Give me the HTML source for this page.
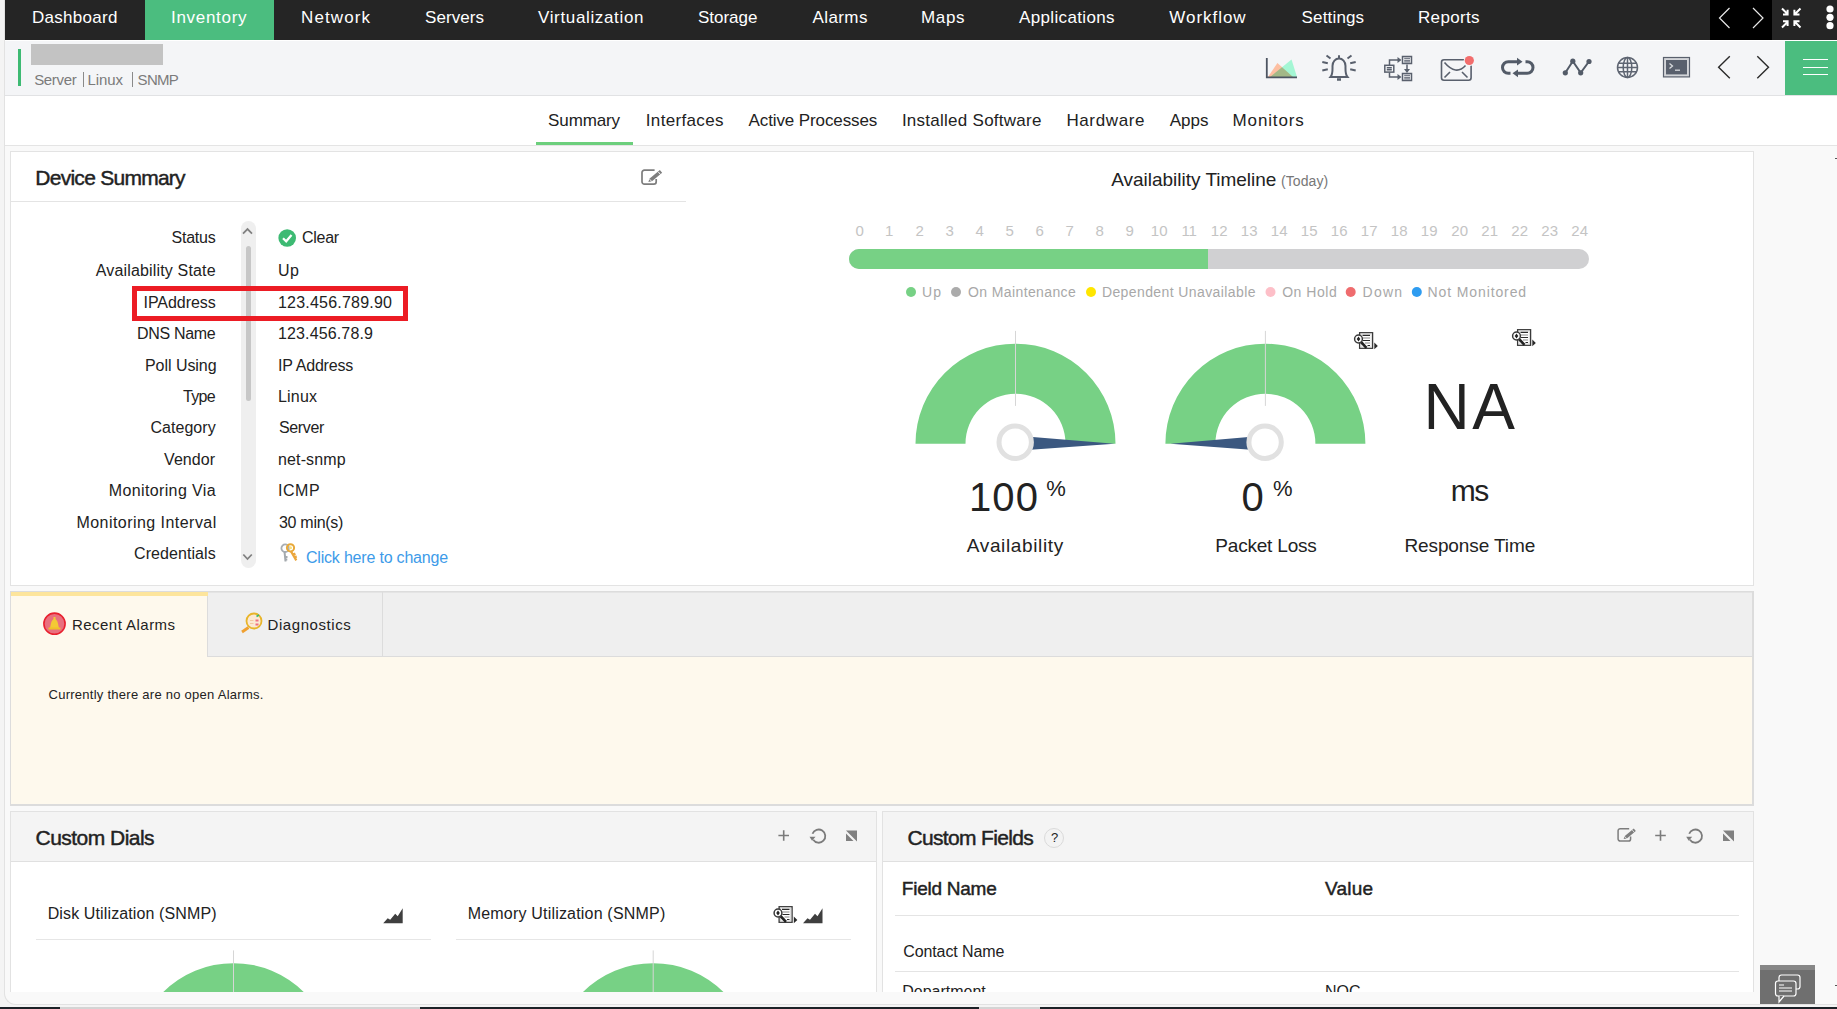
<!DOCTYPE html>
<html><head><meta charset="utf-8">
<style>
html,body{margin:0;padding:0}
body{width:1837px;height:1009px;overflow:hidden;position:relative;background:#f4f4f4;font-family:"Liberation Sans",sans-serif}
.a{position:absolute}
.t{position:absolute;line-height:1;white-space:nowrap;font-family:"Liberation Sans",sans-serif}
svg{position:absolute;overflow:visible}
</style></head><body>
<!-- left strip line -->
<div class="a" style="left:4px;top:0px;width:1px;height:146px;background:#e2e2e2"></div>
<!-- main container bg -->
<div class="a" style="left:4px;top:146px;width:1840px;height:858px;background:#f9f9f9;border-left:1px solid #e2e2e2;border-bottom:1px solid #e2e2e2;border-bottom-left-radius:12px;box-sizing:border-box"></div>
<!-- bottom strip -->


<!-- NAV -->
<div class="a" style="left:5px;top:0;width:1832px;height:40px;background:#252525"></div>
<div class="a" style="left:145px;top:0;width:129px;height:40px;background:#4bbd7f"></div>
<div class="a" style="left:1710px;top:0;width:62px;height:40px;background:#000"></div>
<svg style="left:0;top:0" width="1837" height="40">
  <polyline points="1729.5,8 1719.5,18 1729.5,28" fill="none" stroke="#e8e8e8" stroke-width="1.2"/>
  <polyline points="1753,8 1763,18 1753,28" fill="none" stroke="#e8e8e8" stroke-width="1.2"/>
  <g stroke="#fff" stroke-width="2" fill="none">
    <path d="M1782,8.5 L1787.5,14 M1783,14.5 H1787.6 V9.8"/>
    <path d="M1800.5,8.5 L1795,14 M1799.5,14.5 H1794.4 V9.8"/>
    <path d="M1782,27.5 L1787.5,22 M1783,21.3 H1787.6 V26"/>
    <path d="M1800.5,27.5 L1795,22 M1799.5,21.3 H1794.4 V26"/>
  </g>
  <circle cx="1830" cy="9" r="3.6" fill="#fff"/>
  <circle cx="1830" cy="17.3" r="3.6" fill="#fff"/>
  <circle cx="1830" cy="25.7" r="3.6" fill="#fff"/>
</svg>

<!-- HEADER -->
<div class="a" style="left:5px;top:40px;width:1832px;height:1px;background:#ffffff"></div>
<div class="a" style="left:5px;top:41px;width:1832px;height:54px;background:#f4f5f7"></div>
<div class="a" style="left:5px;top:95px;width:1832px;height:1px;background:#e1e2e4"></div>
<div class="a" style="left:18px;top:49px;width:3px;height:37px;background:#3dba73"></div>
<div class="a" style="left:31px;top:44px;width:132px;height:21px;background:#c3c3c3"></div>
<div class="a" style="left:83px;top:72px;width:1px;height:15px;background:#8a8a8a"></div>
<div class="a" style="left:132px;top:72px;width:1px;height:15px;background:#8a8a8a"></div>
<div class="a" style="left:1785px;top:41px;width:52px;height:54px;background:#4bbd7f"></div>
<div class="a" style="left:1803px;top:59px;width:25px;height:1px;background:#fff"></div>
<div class="a" style="left:1803px;top:67px;width:25px;height:1px;background:#fff"></div>
<div class="a" style="left:1803px;top:74px;width:25px;height:1px;background:#fff"></div>

<svg style="left:0;top:0" width="1837" height="100">
 <g style="isolation:isolate">
  <polygon points="1268,77 1277.4,63 1293,77" fill="#fdbfa2"/>
  <polygon points="1270,77 1291.5,59.5 1297,77" fill="#a4f6d4" style="mix-blend-mode:multiply"/>
 </g>
 <path d="M1266.8,58 V77.3 H1297" fill="none" stroke="#4d5562" stroke-width="1.8"/>
 <g fill="none" stroke="#59606d" stroke-width="2" stroke-linecap="butt">
  <path d="M1339,55.3 V58.5 M1330.5,77 C1333,74 1332.5,70 1332.5,66 C1332.5,61.5 1335.5,58.5 1339,58.5 C1342.5,58.5 1345.5,61.5 1345.5,66 C1345.5,70 1345,74 1347.5,77 H1330.5 Z"/>
  <path d="M1337,79.5 H1341" stroke-width="2.5"/>
  <path d="M1322.3,62 L1327.8,63.3 M1322.3,70.5 L1327.8,69.2 M1355.7,62 L1350.2,63.3 M1355.7,70.5 L1350.2,69.2 M1326.5,55.5 L1330.5,58.5 M1351.5,55.5 L1347.5,58.5"/>
 </g>
 <g fill="none" stroke="#59606d" stroke-width="1.5">
  <rect x="1384.8" y="65.3" width="9" height="6.8"/>
  <path d="M1386.8,67.8 H1391.8 M1386.8,69.8 H1391.8"/>
  <rect x="1402.5" y="56.5" width="9" height="7"/>
  <rect x="1402.5" y="73.5" width="9" height="7"/>
  <path d="M1389.5,65 V60 H1398 M1389.5,72.5 V77 H1398 M1407,64.5 V69.5"/>
 </g>
 <path d="M1404.2,58.3 H1410 M1404.2,60.3 H1410 M1404.2,61.9 H1410 M1404.2,75.3 H1410 M1404.2,77.3 H1410 M1404.2,78.9 H1410" stroke="#59606d" stroke-width="1"/>
 <polygon points="1397.5,57 1401.5,60 1397.5,63" fill="#59606d"/>
 <polygon points="1397.5,74 1401.5,77 1397.5,80" fill="#59606d"/>
 <polygon points="1404,69 1407,73 1410,69" fill="#59606d"/>
 <g fill="none" stroke="#59606d" stroke-width="1.6">
  <rect x="1441.5" y="59.7" width="29.6" height="20.6" rx="2.5"/>
  <path d="M1444.5,62.5 Q1456,76 1465.5,65.5 M1444.5,77.5 L1450,72 M1467.5,77.5 L1462,72"/>
 </g>
 <circle cx="1469.3" cy="60.5" r="5.6" fill="#f4f5f7"/>
 <circle cx="1469.3" cy="60.5" r="4.6" fill="#f26d6d"/>
 <g fill="none" stroke="#535b68" stroke-width="3">
  <path d="M1517.5,61.7 H1508.3 A5.8,5.8 0 0 0 1508.3,73.3 H1510.5"/>
  <path d="M1525.5,61.7 H1527.2 A5.8,5.8 0 0 1 1527.2,73.3 H1517"/>
 </g>
 <polygon points="1517,57.8 1522.5,61.7 1517,65.6" fill="#535b68"/>
 <polygon points="1518,69.4 1512.5,73.3 1518,77.2" fill="#535b68"/>
 <g stroke="#535b68" stroke-width="2" fill="#535b68">
  <polyline points="1565.3,72.8 1572.8,61.2 1580.7,72.8 1589,61.5" fill="none"/>
  <circle cx="1565.3" cy="72.8" r="2.6" stroke="none"/>
  <circle cx="1572.8" cy="61.2" r="2.6" stroke="none"/>
  <circle cx="1580.7" cy="72.8" r="2.6" stroke="none"/>
  <circle cx="1589" cy="61.5" r="2.6" stroke="none"/>
 </g>
 <g fill="none" stroke="#5e6572" stroke-width="1.5">
  <circle cx="1627.5" cy="67.5" r="10"/>
  <ellipse cx="1627.5" cy="67.5" rx="4.3" ry="10"/>
  <path d="M1627.5,57.5 V77.5 M1618,63.2 H1637 M1617.5,67.5 H1637.5 M1618,71.8 H1637"/>
 </g>
 <rect x="1663.5" y="57.5" width="26" height="19.4" fill="#d3d5d9" stroke="#59606d" stroke-width="1.2"/>
 <rect x="1666" y="60" width="21" height="14.4" fill="#59606d"/>
 <path d="M1669.5,63.5 L1672.5,66 L1669.5,68.5" fill="none" stroke="#d8dadd" stroke-width="1.3"/>
 <path d="M1675,70.2 H1680" stroke="#d8dadd" stroke-width="1.3"/>
 <polyline points="1729.8,56.2 1718.6,67.2 1729.8,78.2" fill="none" stroke="#2a2a2a" stroke-width="1.4"/>
 <polyline points="1757.3,56.2 1768.5,67.2 1757.3,78.2" fill="none" stroke="#2a2a2a" stroke-width="1.4"/>
</svg>


<!-- TAB BAR -->
<div class="a" style="left:5px;top:96px;width:1832px;height:49px;background:#ffffff"></div>
<div class="a" style="left:5px;top:145px;width:1832px;height:1px;background:#e4e4e4"></div>
<div class="a" style="left:536px;top:142px;width:97px;height:3px;background:#6ccf7c"></div>


<div class="a" style="left:1835px;top:158px;width:2px;height:1px;background:#555"></div>
<div class="a" style="left:1835px;top:985px;width:2px;height:1px;background:#555"></div>
<!-- CARD 1 -->
<div class="a" style="left:10px;top:151px;width:1744px;height:435px;background:#fff;border:1px solid #e3e3e3;box-sizing:border-box"></div>
<div class="a" style="left:11px;top:201px;width:675px;height:1px;background:#e4e4e4"></div>
<div class="a" style="left:241px;top:221px;width:15px;height:347px;background:#efefef;border-radius:7.5px"></div>
<div class="a" style="left:246px;top:246px;width:5px;height:155px;background:#c7c7c7;border-radius:2.5px"></div>
<div class="a" style="left:132px;top:286px;width:276px;height:35px;border:5px solid #ec1c24;box-sizing:border-box"></div>
<div class="a" style="left:849px;top:249px;width:740px;height:20px;background:#d0d0d2;border-radius:10px"></div>
<div class="a" style="left:849px;top:249px;width:359px;height:20px;background:#77d185;border-radius:10px 0 0 10px"></div>
<svg style="left:0;top:0" width="1837" height="1009">
 <g transform="translate(641,169.2) scale(1.0)">
  <path d="M13.6,1 H3.4 A2.4,2.4 0 0 0 1,3.4 V12.6 A2.4,2.4 0 0 0 3.4,15 H12.8 A2.4,2.4 0 0 0 15.2,12.6 V9.8" fill="none" stroke="#7d7d7d" stroke-width="1.7"/>
  <polygon points="7.3,12.8 8.69,9.3 18.85,0.82 21.15,3.58 10.99,12.06" fill="#7d7d7d"/>
  <path d="M8.4,9.9 L10.9,12.3" stroke="#fff" stroke-width="0.9"/>
  <path d="M17.2,2.6 L19.5,5.3" stroke="#fff" stroke-width="0.9"/>
</g>
 <polyline points="243,233.6 247.5,229.1 252,233.6" fill="none" stroke="#808080" stroke-width="1.8"/>
 <polyline points="243.3,554.5 247.5,559 251.8,554.5" fill="none" stroke="#808080" stroke-width="1.8"/>
 <circle cx="287.2" cy="238" r="8.8" fill="#3dba73"/>
 <polyline points="283,238.2 286.2,241.3 291.5,235" fill="none" stroke="#fff" stroke-width="2.2"/>
 <g transform="translate(280,543)">
  <circle cx="5.2" cy="5.2" r="3.8" fill="none" stroke="#a9aeb3" stroke-width="1.8"/>
  <path d="M4.5,8.5 L5.5,18.5 M5.2,14 H7.5 M5.4,16.5 H7.3" stroke="#a4a9ae" stroke-width="2"/>
  <circle cx="10.5" cy="4.8" r="3.6" fill="none" stroke="#e8a93a" stroke-width="2"/>
  <path d="M10.8,8 L16.3,17.3 M13,11.8 L15.4,10.6 M14.5,14.5 L16.7,13.4" stroke="#eba63c" stroke-width="2.3"/>
  <circle cx="10.5" cy="4.8" r="1.5" fill="#fbe07a"/>
 </g>
 <g>
  <circle cx="911" cy="292" r="5" fill="#77d185"/>
  <circle cx="956" cy="292" r="5" fill="#ababab"/>
  <circle cx="1091" cy="292" r="5" fill="#ffe600"/>
  <circle cx="1270.5" cy="292" r="5" fill="#fdbfc8"/>
  <circle cx="1350.7" cy="292" r="5" fill="#ef6c6e"/>
  <circle cx="1416.8" cy="292" r="5" fill="#2e9cf0"/>
 </g>
 <path d="M915.5,443.7 A100,100 0 0 1 1115.5,443.7 L1065.5,443.7 A50,50 0 0 0 965.5,443.7 Z" fill="#77d185"/><line x1="1015.5" y1="330.9" x2="1015.5" y2="405.9" stroke="#d6d6d6" stroke-width="1"/><polygon points="1023.5,436.2 1114.5,443.7 1023.5,450.2" fill="#3b5880"/><circle cx="1015.2" cy="442.2" r="16.2" fill="#ffffff" stroke="#e1e1e1" stroke-width="5"/>
 <path d="M1165.4,443.7 A100,100 0 0 1 1365.4,443.7 L1315.4,443.7 A50,50 0 0 0 1215.4,443.7 Z" fill="#77d185"/><line x1="1265.4" y1="330.9" x2="1265.4" y2="405.9" stroke="#d6d6d6" stroke-width="1"/><polygon points="1257.4,436.2 1170.4,443.7 1257.4,450.2" fill="#3b5880"/><circle cx="1265.1000000000001" cy="442.2" r="16.2" fill="#ffffff" stroke="#e1e1e1" stroke-width="5"/>
 <g transform="translate(1354,332)">
  <rect x="5.6" y="0.7" width="13" height="15.6" fill="#fff" stroke="#3a3a3a" stroke-width="1.3"/>
  <rect x="7" y="2" width="10.2" height="13" fill="none" stroke="#d0d0d0" stroke-width="0.8"/>
  <path d="M8.5,3.4 H16 M9,8.5 H16 M13.5,13.5 H16" stroke="#2a2a2a" stroke-width="1.2"/>
  <path d="M9,6 H16 M11,11 H16" stroke="#888" stroke-width="1.2"/>
  <path d="M6.5,9.5 L12.5,15.8" stroke="#222" stroke-width="2.6"/>
  <circle cx="4.5" cy="7" r="3.9" fill="#fff" stroke="#3a3a3a" stroke-width="1.5"/>
  <path d="M4.5,4.6 L6.3,7 L4.5,9.4 L2.7,7 Z" fill="#222"/>
  <polygon points="20.3,10.5 23.8,14 20.3,17.3" fill="#2a2a2a"/>
</g>
 <g transform="translate(1512,329)">
  <rect x="5.6" y="0.7" width="13" height="15.6" fill="#fff" stroke="#3a3a3a" stroke-width="1.3"/>
  <rect x="7" y="2" width="10.2" height="13" fill="none" stroke="#d0d0d0" stroke-width="0.8"/>
  <path d="M8.5,3.4 H16 M9,8.5 H16 M13.5,13.5 H16" stroke="#2a2a2a" stroke-width="1.2"/>
  <path d="M9,6 H16 M11,11 H16" stroke="#888" stroke-width="1.2"/>
  <path d="M6.5,9.5 L12.5,15.8" stroke="#222" stroke-width="2.6"/>
  <circle cx="4.5" cy="7" r="3.9" fill="#fff" stroke="#3a3a3a" stroke-width="1.5"/>
  <path d="M4.5,4.6 L6.3,7 L4.5,9.4 L2.7,7 Z" fill="#222"/>
  <polygon points="20.3,10.5 23.8,14 20.3,17.3" fill="#2a2a2a"/>
</g>
</svg>

<!-- CARD 2 TABS -->
<div class="a" style="left:10px;top:591px;width:1744px;height:215px;background:#fef9ed;border:1px solid #dcdcdc;border-width:1px 2px 2px 1px;box-sizing:border-box"></div>
<div class="a" style="left:207px;top:592px;width:1545px;height:65px;background:#efefef;border-left:1px solid #dcdcdc;border-bottom:1px solid #dcdcdc;border-top:1px solid #e4e4e4;box-sizing:border-box"></div>
<div class="a" style="left:382px;top:592px;width:1px;height:64px;background:#dcdcdc"></div>
<div class="a" style="left:11px;top:592px;width:197px;height:4px;background:#fde59c"></div>
<svg style="left:0;top:0" width="1837" height="1009">
 <circle cx="54.5" cy="623.7" r="10.6" fill="#e9707e" stroke="#e8202e" stroke-width="1.6"/>
 <path d="M50,628 C51,625 50.5,620.5 54.5,618.5 C58.5,620.5 58,625 59,628 Z" fill="#f4c935"/>
 <rect x="48.5" y="627.5" width="12" height="2" fill="#f0c02a"/>
 <rect x="53.5" y="617" width="2" height="2" fill="#f4c935"/>
 <g transform="translate(239.5,612.5)">
  <circle cx="14.5" cy="8.5" r="7.5" fill="#fbe9d4" stroke="#e8b52a" stroke-width="1.8"/>
  <path d="M9,15 L2.5,19.5" stroke="#f0a030" stroke-width="2.8"/>
  <path d="M17,4 L19.5,2.5" stroke="#3cb870" stroke-width="1.6"/>
  <rect x="16" y="7" width="3" height="2" fill="#f07080"/>
  <rect x="16" y="11" width="3" height="2" fill="#f07080"/>
  <path d="M10.5,8 H14 M10.5,11 H14" stroke="#f3c9a0" stroke-width="1"/>
 </g>
</svg>

<!-- CARD 3 CUSTOM DIALS -->
<div class="a" style="left:10px;top:811px;width:867px;height:181px;background:#fff;border:1px solid #e2e2e2;border-bottom:0;box-sizing:border-box"></div>
<div class="a" style="left:11px;top:812px;width:865px;height:49px;background:#f4f4f4;border-bottom:1px solid #e0e0e0"></div>
<div class="a" style="left:36px;top:939px;width:395px;height:1px;background:#e6e6e6"></div>
<div class="a" style="left:456px;top:939px;width:395px;height:1px;background:#e6e6e6"></div>
<!-- CARD 4 CUSTOM FIELDS -->
<div class="a" style="left:882px;top:811px;width:872px;height:181px;background:#fff;border:1px solid #e2e2e2;border-bottom:0;box-sizing:border-box"></div>
<div class="a" style="left:883px;top:812px;width:870px;height:49px;background:#f4f4f4;border-bottom:1px solid #e0e0e0"></div>
<div class="a" style="left:895px;top:915px;width:844px;height:1px;background:#e4e4e4"></div>
<div class="a" style="left:895px;top:971px;width:844px;height:1px;background:#e4e4e4"></div>
<div class="a" style="left:1044px;top:828px;width:20px;height:20px;border-radius:50%;background:#f3f3f3;border:1px solid #dadada;box-sizing:border-box"></div>
<span class="t" style="left:1051px;top:831px;font-size:13px;color:#222">?</span>
<svg style="left:0;top:0;overflow:hidden" width="1837" height="992">
 <path d="M778.4000000000001,835.5 H789.0 M783.7,830.2 V840.8" stroke="#7b7b7b" stroke-width="1.6"/><g transform="translate(0.5,0.8)"><path d="M812.7,839.0 A6.6,6.6 0 1 0 812,833.0" fill="none" stroke="#7b7b7b" stroke-width="1.8"/><polygon points="809,836.0 815,836.0 811.5,840.0" fill="#7b7b7b"/></g><polygon points="846,830.5 857,830.5 857,841.5 " fill="#808080"/><polygon points="846,832.3 846,841.5 855.2,841.5" fill="#f4f4f4"/><polygon points="846,833.5 846,841.0 853.5,841.0" fill="#808080"/>
 <path d="M1655.2,835.5 H1665.8 M1660.5,830.2 V840.8" stroke="#7b7b7b" stroke-width="1.6"/><g transform="translate(0.5,0.8)"><path d="M1689.4,839.0 A6.6,6.6 0 1 0 1688.7,833.0" fill="none" stroke="#7b7b7b" stroke-width="1.8"/><polygon points="1685.7,836.0 1691.7,836.0 1688.2,840.0" fill="#7b7b7b"/></g><polygon points="1723,830.5 1734,830.5 1734,841.5 " fill="#808080"/><polygon points="1723,832.3 1723,841.5 1732.2,841.5" fill="#f4f4f4"/><polygon points="1723,833.5 1723,841.0 1730.5,841.0" fill="#808080"/>
 <g transform="translate(1617.2,827.8) scale(0.88)">
  <path d="M13.6,1 H3.4 A2.4,2.4 0 0 0 1,3.4 V12.6 A2.4,2.4 0 0 0 3.4,15 H12.8 A2.4,2.4 0 0 0 15.2,12.6 V9.8" fill="none" stroke="#7d7d7d" stroke-width="1.7"/>
  <polygon points="7.3,12.8 8.69,9.3 18.85,0.82 21.15,3.58 10.99,12.06" fill="#7d7d7d"/>
  <path d="M8.4,9.9 L10.9,12.3" stroke="#f4f4f4" stroke-width="0.9"/>
  <path d="M17.2,2.6 L19.5,5.3" stroke="#f4f4f4" stroke-width="0.9"/>
</g>
 <polygon transform="translate(383.2,908.3)" points="0,15 4.5,10 7,11.5 12,5.5 14.5,8 19.5,0 19.5,15" fill="#3f3f3f"/>
 <polygon transform="translate(803,908.3)" points="0,15 4.5,10 7,11.5 12,5.5 14.5,8 19.5,0 19.5,15" fill="#3f3f3f"/>
 <g transform="translate(773.5,906)">
  <rect x="5.6" y="0.7" width="13" height="15.6" fill="#fff" stroke="#3a3a3a" stroke-width="1.3"/>
  <rect x="7" y="2" width="10.2" height="13" fill="none" stroke="#d0d0d0" stroke-width="0.8"/>
  <path d="M8.5,3.4 H16 M9,8.5 H16 M13.5,13.5 H16" stroke="#2a2a2a" stroke-width="1.2"/>
  <path d="M9,6 H16 M11,11 H16" stroke="#888" stroke-width="1.2"/>
  <path d="M6.5,9.5 L12.5,15.8" stroke="#222" stroke-width="2.6"/>
  <circle cx="4.5" cy="7" r="3.9" fill="#fff" stroke="#3a3a3a" stroke-width="1.5"/>
  <path d="M4.5,4.6 L6.3,7 L4.5,9.4 L2.7,7 Z" fill="#222"/>
  <polygon points="20.3,10.5 23.8,14 20.3,17.3" fill="#2a2a2a"/>
</g>
 <path d="M133.5,1063.2 A100,100 0 0 1 333.5,1063.2 L283.5,1063.2 A50,50 0 0 0 183.5,1063.2 Z" fill="#77d185"/><line x1="233.5" y1="950.4000000000001" x2="233.5" y2="1025.4" stroke="#d6d6d6" stroke-width="1"/>
 <path d="M553.2,1063.2 A100,100 0 0 1 753.2,1063.2 L703.2,1063.2 A50,50 0 0 0 603.2,1063.2 Z" fill="#77d185"/><line x1="653.2" y1="950.4000000000001" x2="653.2" y2="1025.4" stroke="#d6d6d6" stroke-width="1"/>
</svg>


<span class="t" style="left:32.00px;top:9.00px;font-size:17px;color:#ffffff;letter-spacing:0.286px">Dashboard</span>
<span class="t" style="left:171.00px;top:9.00px;font-size:17px;color:#ffffff;letter-spacing:0.697px">Inventory</span>
<span class="t" style="left:301.00px;top:9.00px;font-size:17px;color:#ffffff;letter-spacing:1.109px">Network</span>
<span class="t" style="left:425.00px;top:9.00px;font-size:17px;color:#ffffff;letter-spacing:0.072px">Servers</span>
<span class="t" style="left:538.00px;top:9.00px;font-size:17px;color:#ffffff;letter-spacing:0.649px">Virtualization</span>
<span class="t" style="left:698.00px;top:9.00px;font-size:17px;color:#ffffff;letter-spacing:-0.014px">Storage</span>
<span class="t" style="left:812.50px;top:9.00px;font-size:17px;color:#ffffff;letter-spacing:0.401px">Alarms</span>
<span class="t" style="left:921.00px;top:9.00px;font-size:17px;color:#ffffff;letter-spacing:0.643px">Maps</span>
<span class="t" style="left:1019.00px;top:9.00px;font-size:17px;color:#ffffff;letter-spacing:0.349px">Applications</span>
<span class="t" style="left:1169.30px;top:9.00px;font-size:17px;color:#ffffff;letter-spacing:0.956px">Workflow</span>
<span class="t" style="left:1301.60px;top:9.00px;font-size:17px;color:#ffffff;letter-spacing:0.153px">Settings</span>
<span class="t" style="left:1418.00px;top:9.00px;font-size:17px;color:#ffffff;letter-spacing:0.329px">Reports</span>
<span class="t" style="left:34.20px;top:72.00px;font-size:15px;color:#7b7b7b;letter-spacing:-0.337px">Server</span>
<span class="t" style="left:87.60px;top:72.00px;font-size:15px;color:#7b7b7b;letter-spacing:-0.140px">Linux</span>
<span class="t" style="left:137.60px;top:72.00px;font-size:15px;color:#7b7b7b;letter-spacing:-0.711px">SNMP</span>
<span class="t" style="left:548.10px;top:112.00px;font-size:17px;color:#222222;letter-spacing:-0.122px">Summary</span>
<span class="t" style="left:645.80px;top:112.00px;font-size:17px;color:#222222;letter-spacing:0.339px">Interfaces</span>
<span class="t" style="left:748.50px;top:112.00px;font-size:17px;color:#222222;letter-spacing:-0.105px">Active Processes</span>
<span class="t" style="left:901.90px;top:112.00px;font-size:17px;color:#222222;letter-spacing:0.260px">Installed Software</span>
<span class="t" style="left:1066.40px;top:112.00px;font-size:17px;color:#222222;letter-spacing:0.623px">Hardware</span>
<span class="t" style="left:1169.70px;top:112.00px;font-size:17px;color:#222222;letter-spacing:-0.016px">Apps</span>
<span class="t" style="left:1232.60px;top:112.00px;font-size:17px;color:#222222;letter-spacing:0.845px">Monitors</span>
<span class="t" style="left:35.30px;top:167.00px;font-size:21px;color:#222222;-webkit-text-stroke:0.45px #222222;letter-spacing:-0.736px">Device Summary</span>
<span class="t" style="left:171.50px;top:230.00px;font-size:16px;color:#222222;letter-spacing:-0.232px">Status</span>
<span class="t" style="left:95.70px;top:263.00px;font-size:16px;color:#222222;letter-spacing:0.165px">Availability State</span>
<span class="t" style="left:143.50px;top:295.00px;font-size:16px;color:#222222;letter-spacing:-0.053px">IPAddress</span>
<span class="t" style="left:137.00px;top:326.00px;font-size:16px;color:#222222;letter-spacing:-0.330px">DNS Name</span>
<span class="t" style="left:145.00px;top:358.00px;font-size:16px;color:#222222;letter-spacing:-0.048px">Poll Using</span>
<span class="t" style="left:183.00px;top:389.00px;font-size:16px;color:#222222;letter-spacing:-0.696px">Type</span>
<span class="t" style="left:150.40px;top:420.00px;font-size:16px;color:#222222;letter-spacing:0.054px">Category</span>
<span class="t" style="left:164.10px;top:452.00px;font-size:16px;color:#222222;letter-spacing:0.043px">Vendor</span>
<span class="t" style="left:108.70px;top:483.00px;font-size:16px;color:#222222;letter-spacing:0.378px">Monitoring Via</span>
<span class="t" style="left:76.40px;top:515.00px;font-size:16px;color:#222222;letter-spacing:0.458px">Monitoring Interval</span>
<span class="t" style="left:134.00px;top:546.00px;font-size:16px;color:#222222;letter-spacing:0.077px">Credentials</span>
<span class="t" style="left:302.00px;top:230.00px;font-size:16px;color:#222222;letter-spacing:-0.277px">Clear</span>
<span class="t" style="left:278.00px;top:263.00px;font-size:16px;color:#222222;letter-spacing:0.445px">Up</span>
<span class="t" style="left:278.00px;top:295.00px;font-size:16px;color:#222222;letter-spacing:0.206px">123.456.789.90</span>
<span class="t" style="left:278.00px;top:326.00px;font-size:16px;color:#222222;letter-spacing:0.134px">123.456.78.9</span>
<span class="t" style="left:278.00px;top:358.00px;font-size:16px;color:#222222;letter-spacing:-0.206px">IP Address</span>
<span class="t" style="left:278.00px;top:389.00px;font-size:16px;color:#222222;letter-spacing:0.188px">Linux</span>
<span class="t" style="left:279.00px;top:420.00px;font-size:16px;color:#222222;letter-spacing:-0.359px">Server</span>
<span class="t" style="left:278.00px;top:452.00px;font-size:16px;color:#222222;letter-spacing:0.129px">net-snmp</span>
<span class="t" style="left:278.00px;top:483.00px;font-size:16px;color:#222222;letter-spacing:0.557px">ICMP</span>
<span class="t" style="left:279.00px;top:515.00px;font-size:16px;color:#222222;letter-spacing:-0.294px">30 min(s)</span>
<span class="t" style="left:306.00px;top:550.00px;font-size:16px;color:#3d9be9;letter-spacing:-0.198px">Click here to change</span>
<span class="t" style="left:1111.20px;top:170.00px;font-size:19px;color:#222222;letter-spacing:-0.011px">Availability Timeline</span>
<span class="t" style="left:1281.00px;top:174.00px;font-size:14px;color:#777777;letter-spacing:0.080px">(Today)</span>
<span class="t" style="left:855.50px;top:223.00px;font-size:15px;color:#c4c4c4">0</span>
<span class="t" style="left:885.00px;top:223.00px;font-size:15px;color:#c4c4c4">1</span>
<span class="t" style="left:915.50px;top:223.00px;font-size:15px;color:#c4c4c4">2</span>
<span class="t" style="left:945.50px;top:223.00px;font-size:15px;color:#c4c4c4">3</span>
<span class="t" style="left:975.50px;top:223.00px;font-size:15px;color:#c4c4c4">4</span>
<span class="t" style="left:1005.50px;top:223.00px;font-size:15px;color:#c4c4c4">5</span>
<span class="t" style="left:1035.50px;top:223.00px;font-size:15px;color:#c4c4c4">6</span>
<span class="t" style="left:1065.50px;top:223.00px;font-size:15px;color:#c4c4c4">7</span>
<span class="t" style="left:1095.50px;top:223.00px;font-size:15px;color:#c4c4c4">8</span>
<span class="t" style="left:1125.50px;top:223.00px;font-size:15px;color:#c4c4c4">9</span>
<span class="t" style="left:1150.83px;top:223.00px;font-size:15px;color:#c4c4c4">10</span>
<span class="t" style="left:1181.39px;top:223.00px;font-size:15px;color:#c4c4c4">11</span>
<span class="t" style="left:1210.83px;top:223.00px;font-size:15px;color:#c4c4c4">12</span>
<span class="t" style="left:1240.83px;top:223.00px;font-size:15px;color:#c4c4c4">13</span>
<span class="t" style="left:1270.83px;top:223.00px;font-size:15px;color:#c4c4c4">14</span>
<span class="t" style="left:1300.83px;top:223.00px;font-size:15px;color:#c4c4c4">15</span>
<span class="t" style="left:1330.83px;top:223.00px;font-size:15px;color:#c4c4c4">16</span>
<span class="t" style="left:1360.83px;top:223.00px;font-size:15px;color:#c4c4c4">17</span>
<span class="t" style="left:1390.83px;top:223.00px;font-size:15px;color:#c4c4c4">18</span>
<span class="t" style="left:1420.83px;top:223.00px;font-size:15px;color:#c4c4c4">19</span>
<span class="t" style="left:1451.33px;top:223.00px;font-size:15px;color:#c4c4c4">20</span>
<span class="t" style="left:1481.33px;top:223.00px;font-size:15px;color:#c4c4c4">21</span>
<span class="t" style="left:1511.33px;top:223.00px;font-size:15px;color:#c4c4c4">22</span>
<span class="t" style="left:1541.33px;top:223.00px;font-size:15px;color:#c4c4c4">23</span>
<span class="t" style="left:1571.33px;top:223.00px;font-size:15px;color:#c4c4c4">24</span>
<span class="t" style="left:922.00px;top:285.00px;font-size:14px;color:#a8a8a8;letter-spacing:1.090px">Up</span>
<span class="t" style="left:968.00px;top:285.00px;font-size:14px;color:#a8a8a8;letter-spacing:0.389px">On Maintenance</span>
<span class="t" style="left:1101.90px;top:285.00px;font-size:14px;color:#a8a8a8;letter-spacing:0.402px">Dependent Unavailable</span>
<span class="t" style="left:1282.20px;top:285.00px;font-size:14px;color:#a8a8a8;letter-spacing:0.538px">On Hold</span>
<span class="t" style="left:1362.60px;top:285.00px;font-size:14px;color:#a8a8a8;letter-spacing:1.198px">Down</span>
<span class="t" style="left:1427.60px;top:285.00px;font-size:14px;color:#a8a8a8;letter-spacing:0.880px">Not Monitored</span>
<span class="t" style="left:968.90px;top:477.00px;font-size:40px;color:#222222;letter-spacing:1.154px">100</span>
<span class="t" style="left:1046.20px;top:478.00px;font-size:22px;color:#222222">%</span>
<span class="t" style="left:1241.40px;top:477.00px;font-size:40px;color:#222222">0</span>
<span class="t" style="left:1273.00px;top:478.00px;font-size:22px;color:#222222">%</span>
<span class="t" style="left:1423.40px;top:375.00px;font-size:64px;color:#222222;letter-spacing:2.581px">NA</span>
<span class="t" style="left:1450.70px;top:476.00px;font-size:30px;color:#222222;letter-spacing:-1.490px">ms</span>
<span class="t" style="left:966.80px;top:536.00px;font-size:19px;color:#222222;letter-spacing:0.635px">Availability</span>
<span class="t" style="left:1215.30px;top:536.00px;font-size:19px;color:#222222;letter-spacing:-0.200px">Packet Loss</span>
<span class="t" style="left:1404.40px;top:536.00px;font-size:19px;color:#222222;letter-spacing:-0.099px">Response Time</span>
<span class="t" style="left:72.00px;top:617.00px;font-size:15px;color:#222222;letter-spacing:0.461px">Recent Alarms</span>
<span class="t" style="left:267.50px;top:617.00px;font-size:15px;color:#222222;letter-spacing:0.577px">Diagnostics</span>
<span class="t" style="left:48.50px;top:688.00px;font-size:13px;color:#222222;letter-spacing:0.263px">Currently there are no open Alarms.</span>
<span class="t" style="left:35.50px;top:827.00px;font-size:21px;color:#222222;-webkit-text-stroke:0.45px #222222;letter-spacing:-0.524px">Custom Dials</span>
<span class="t" style="left:907.50px;top:827.00px;font-size:21px;color:#222222;-webkit-text-stroke:0.45px #222222;letter-spacing:-0.659px">Custom Fields</span>
<span class="t" style="left:47.70px;top:906.00px;font-size:16px;color:#222222;letter-spacing:0.122px">Disk Utilization (SNMP)</span>
<span class="t" style="left:467.70px;top:906.00px;font-size:16px;color:#222222;letter-spacing:0.192px">Memory Utilization (SNMP)</span>
<span class="t" style="left:901.80px;top:879.00px;font-size:19px;color:#222222;-webkit-text-stroke:0.45px #222222;letter-spacing:-0.242px">Field Name</span>
<span class="t" style="left:1325.00px;top:879.00px;font-size:19px;color:#222222;-webkit-text-stroke:0.45px #222222;letter-spacing:0.221px">Value</span>
<span class="t" style="left:903.20px;top:944.00px;font-size:16px;color:#222222;letter-spacing:-0.097px">Contact Name</span>
<span class="t" style="left:902.20px;top:984.00px;font-size:16px;color:#222222">Department</span>
<span class="t" style="left:1325.00px;top:984.00px;font-size:16px;color:#222222">NOC</span>

<!-- bottom clip overlay -->
<div class="a" style="z-index:20;left:0;top:1007px;width:1837px;height:2px;background:#1c2127"></div>
<div class="a" style="z-index:20;left:60px;top:1007px;width:360px;height:2px;background:#d4d4d4"></div>
<div class="a" style="z-index:20;left:979px;top:1007px;width:61px;height:2px;background:#d4d4d4"></div>
<div class="a" style="z-index:10;left:4px;top:992px;width:1840px;height:13px;background:#f9f9f9;border-left:1px solid #e2e2e2;border-bottom:1px solid #e2e2e2;border-bottom-left-radius:12px;box-sizing:border-box"></div>
<div class="a" style="z-index:10;left:0;top:1005px;width:1837px;height:2px;background:#f4f4f4"></div>
<div class="a" style="z-index:11;left:1760px;top:965px;width:55px;height:39px;background:#6f6f6f"></div>
<div class="a" style="z-index:11;left:1760px;top:965px;width:55px;height:5px;background:#878787"></div>
<svg style="left:0;top:0;z-index:12" width="1837" height="1009">
 <rect x="1779" y="975" width="21" height="14" rx="2.5" fill="#6f6f6f" stroke="#fff" stroke-width="1.2"/>
 <rect x="1775.5" y="981" width="20.5" height="15" rx="2.5" fill="#6f6f6f" stroke="#fff" stroke-width="1.2"/>
 <path d="M1779,996 L1779,1002 L1784,996" fill="#6f6f6f" stroke="#fff" stroke-width="1.2"/>
 <path d="M1779,985 H1784 M1779,988 H1792 M1779,991 H1792" stroke="#fff" stroke-width="1.2"/>
</svg>

</body></html>
